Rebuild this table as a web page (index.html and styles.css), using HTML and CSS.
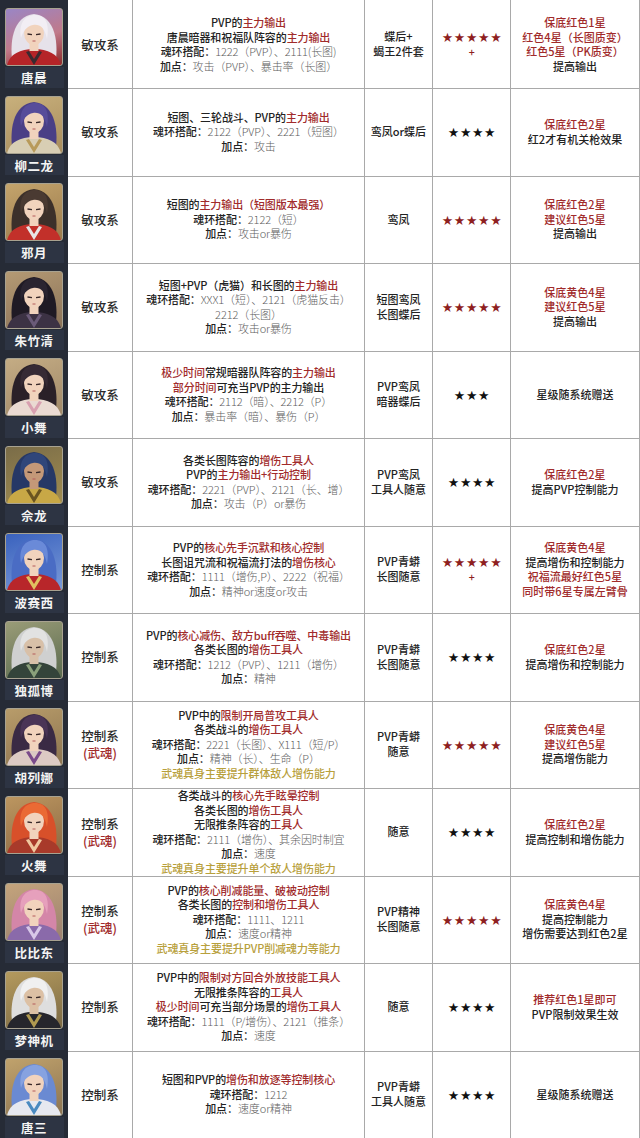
FILE: index.html
```html
<!DOCTYPE html>
<html lang="zh-CN">
<head>
<meta charset="utf-8">
<title>斗罗魂师推荐</title>
<link rel="stylesheet" href="styles.css">
</head>
<body>
<svg class="defs" width="0" height="0" aria-hidden="true">
  <symbol id="fig" viewBox="0 0 56 56">
    <path class="hb" d="M7 56 C3 36 6 7 28 5 C50 7 53 36 49 56 Z"/>
    <path class="cl" d="M1 56 C4 45 14 40 28 40 C42 40 52 45 55 56 Z"/>
    <path class="ac" d="M20 43 L28 56 L36 43 L33 42 L28 50 L23 42 Z"/>
    <rect class="sk" x="23.5" y="31" width="9" height="11"/>
    <ellipse class="sk" cx="28" cy="24" rx="10" ry="12"/>
    <path class="hf" d="M15 29 C12 12 21 6 29 6 C39 6 44 14 41 30 C39 19 34 15 27 16 C21 17 17 22 15 29 Z"/>
    <path class="ey" d="M21.5 25 L26 25.6 M30 25.6 L34.5 25"/>
    <path class="lp" d="M26.5 32 L29.5 32"/>
  </symbol>
</svg>

<main class="sheet">
  <div class="row">
    <div class="av"><div class="pic a1"><svg viewBox="0 0 56 56"><use href="#fig"/></svg></div><div class="nm">唐晨</div></div>
    <div class="c type">敏攻系</div>
    <div class="c desc"><div>PVP的<span class="r">主力输出</span><br>唐晨暗器和祝福队阵容的<span class="r">主力输出</span><br>魂环搭配：<span class="g">1222（PVP）、2111(长图)</span><br>加点：<span class="g">攻击（PVP）、暴击率（长图）</span></div></div>
    <div class="c item"><div>蝶后+<br>蝎王2件套</div></div>
    <div class="c stars red"><div>★★★★★<br>+</div></div>
    <div class="c note"><div><span class="r">保底红色1星</span><br><span class="r">红色4星（长图质变）</span><br><span class="r">红色5星（PK质变）</span><br>提高输出</div></div>
  </div>

  <div class="row">
    <div class="av"><div class="pic a2"><svg viewBox="0 0 56 56"><use href="#fig"/></svg></div><div class="nm">柳二龙</div></div>
    <div class="c type">敏攻系</div>
    <div class="c desc"><div>短图、三轮战斗、PVP的<span class="r">主力输出</span><br>魂环搭配：<span class="g">2122（PVP）、2221（短图）</span><br>加点：<span class="g">攻击</span></div></div>
    <div class="c item"><div>鸾凤or蝶后</div></div>
    <div class="c stars"><div>★★★★</div></div>
    <div class="c note"><div><span class="r">保底红色2星</span><br>红2才有机关枪效果</div></div>
  </div>

  <div class="row">
    <div class="av"><div class="pic a3"><svg viewBox="0 0 56 56"><use href="#fig"/></svg></div><div class="nm">邪月</div></div>
    <div class="c type">敏攻系</div>
    <div class="c desc"><div>短图的<span class="r">主力输出（短图版本最强）</span><br>魂环搭配：<span class="g">2122（短）</span><br>加点：<span class="g">攻击or暴伤</span></div></div>
    <div class="c item"><div>鸾凤</div></div>
    <div class="c stars red"><div>★★★★★</div></div>
    <div class="c note"><div><span class="r">保底红色2星</span><br><span class="r">建议红色5星</span><br>提高输出</div></div>
  </div>

  <div class="row">
    <div class="av"><div class="pic a4"><svg viewBox="0 0 56 56"><use href="#fig"/></svg></div><div class="nm">朱竹清</div></div>
    <div class="c type">敏攻系</div>
    <div class="c desc"><div>短图+PVP（虎猫）和长图的<span class="r">主力输出</span><br>魂环搭配：<span class="g">XXX1（短）、2121（虎猫反击）</span><br><span class="g">2212（长图）</span><br>加点：<span class="g">攻击or暴伤</span></div></div>
    <div class="c item"><div>短图鸾凤<br>长图蝶后</div></div>
    <div class="c stars red"><div>★★★★★</div></div>
    <div class="c note"><div><span class="r">保底黄色4星</span><br><span class="r">建议红色5星</span><br>提高输出</div></div>
  </div>

  <div class="row">
    <div class="av"><div class="pic a5"><svg viewBox="0 0 56 56"><use href="#fig"/></svg></div><div class="nm">小舞</div></div>
    <div class="c type">敏攻系</div>
    <div class="c desc"><div><span class="r">极少时间</span>常规暗器队阵容的<span class="r">主力输出</span><br><span class="r">部分时间</span>可充当PVP的主力输出<br>魂环搭配：<span class="g">2112（暗）、2212（P）</span><br>加点：<span class="g">暴击率（暗）、暴伤（P）</span></div></div>
    <div class="c item"><div>PVP鸾凤<br>暗器蝶后</div></div>
    <div class="c stars"><div>★★★</div></div>
    <div class="c note"><div>星级随系统赠送</div></div>
  </div>

  <div class="row">
    <div class="av"><div class="pic a6"><svg viewBox="0 0 56 56"><use href="#fig"/></svg></div><div class="nm">佘龙</div></div>
    <div class="c type">敏攻系</div>
    <div class="c desc"><div>各类长图阵容的<span class="r">增伤工具人</span><br>PVP的<span class="r">主力输出+行动控制</span><br>魂环搭配：<span class="g">2221（PVP）、2121（长、增）</span><br>加点：<span class="g">攻击（P）or暴伤</span></div></div>
    <div class="c item"><div>PVP鸾凤<br>工具人随意</div></div>
    <div class="c stars"><div>★★★★</div></div>
    <div class="c note"><div><span class="r">保底红色2星</span><br>提高PVP控制能力</div></div>
  </div>

  <div class="row">
    <div class="av"><div class="pic a7"><svg viewBox="0 0 56 56"><use href="#fig"/></svg></div><div class="nm">波赛西</div></div>
    <div class="c type">控制系</div>
    <div class="c desc"><div>PVP的<span class="r">核心先手沉默和核心控制</span><br>长图诅咒流和祝福流打法的<span class="r">增伤核心</span><br>魂环搭配：<span class="g">1111（增伤,P）、2222（祝福）</span><br>加点：<span class="g">精神or速度or攻击</span></div></div>
    <div class="c item"><div>PVP青蟒<br>长图随意</div></div>
    <div class="c stars red"><div>★★★★★<br>+</div></div>
    <div class="c note"><div><span class="r">保底黄色4星</span><br>提高增伤和控制能力<br><span class="r">祝福流最好红色5星</span><br><span class="r">同时带6星专属左臂骨</span></div></div>
  </div>

  <div class="row">
    <div class="av"><div class="pic a8"><svg viewBox="0 0 56 56"><use href="#fig"/></svg></div><div class="nm">独孤博</div></div>
    <div class="c type">控制系</div>
    <div class="c desc"><div>PVP的<span class="r">核心减伤、敌方buff吞噬、中毒输出</span><br>各类长图的<span class="r">增伤工具人</span><br>魂环搭配：<span class="g">1212（PVP）、1211（增伤）</span><br>加点：<span class="g">精神</span></div></div>
    <div class="c item"><div>PVP青蟒<br>长图随意</div></div>
    <div class="c stars"><div>★★★★</div></div>
    <div class="c note"><div><span class="r">保底红色2星</span><br>提高增伤和控制能力</div></div>
  </div>

  <div class="row">
    <div class="av"><div class="pic a9"><svg viewBox="0 0 56 56"><use href="#fig"/></svg></div><div class="nm">胡列娜</div></div>
    <div class="c type"><div>控制系<br><span class="r">(武魂)</span></div></div>
    <div class="c desc"><div>PVP中的<span class="r">限制开局普攻工具人</span><br>各类战斗的<span class="r">增伤工具人</span><br>魂环搭配：<span class="g">2221（长图）、X111（短/P）</span><br>加点：<span class="g">精神（长）、生命（P）</span><br><span class="y">武魂真身主要提升群体敌人增伤能力</span></div></div>
    <div class="c item"><div>PVP青蟒<br>随意</div></div>
    <div class="c stars red"><div>★★★★★</div></div>
    <div class="c note"><div><span class="r">保底黄色4星</span><br><span class="r">建议红色5星</span><br>提高增伤能力</div></div>
  </div>

  <div class="row">
    <div class="av"><div class="pic a10"><svg viewBox="0 0 56 56"><use href="#fig"/></svg></div><div class="nm">火舞</div></div>
    <div class="c type"><div>控制系<br><span class="r">(武魂)</span></div></div>
    <div class="c desc"><div>各类战斗的<span class="r">核心先手眩晕控制</span><br>各类长图的<span class="r">增伤工具人</span><br>无限推条阵容的<span class="r">工具人</span><br>魂环搭配：<span class="g">2111（增伤）、其余因时制宜</span><br>加点：<span class="g">速度</span><br><span class="y">武魂真身主要提升单个敌人增伤能力</span></div></div>
    <div class="c item"><div>随意</div></div>
    <div class="c stars"><div>★★★★</div></div>
    <div class="c note"><div><span class="r">保底红色2星</span><br>提高控制和增伤能力</div></div>
  </div>

  <div class="row">
    <div class="av"><div class="pic a11"><svg viewBox="0 0 56 56"><use href="#fig"/></svg></div><div class="nm">比比东</div></div>
    <div class="c type"><div>控制系<br><span class="r">(武魂)</span></div></div>
    <div class="c desc"><div>PVP的<span class="r">核心削减能量、破被动控制</span><br>各类长图的<span class="r">控制和增伤工具人</span><br>魂环搭配：<span class="g">1111、1211</span><br>加点：<span class="g">速度or精神</span><br><span class="y">武魂真身主要提升PVP削减魂力等能力</span></div></div>
    <div class="c item"><div>PVP精神<br>长图随意</div></div>
    <div class="c stars red"><div>★★★★★</div></div>
    <div class="c note"><div><span class="r">保底黄色4星</span><br>提高控制能力<br>增伤需要达到红色2星</div></div>
  </div>

  <div class="row">
    <div class="av"><div class="pic a12"><svg viewBox="0 0 56 56"><use href="#fig"/></svg></div><div class="nm">梦神机</div></div>
    <div class="c type">控制系</div>
    <div class="c desc"><div>PVP中的<span class="r">限制对方回合外放技能工具人</span><br>无限推条阵容的<span class="r">工具人</span><br><span class="r">极少时间</span>可充当部分场景的<span class="r">增伤工具人</span><br>魂环搭配：<span class="g">1111（P/增伤）、2121（推条）</span><br>加点：<span class="g">速度</span></div></div>
    <div class="c item"><div>随意</div></div>
    <div class="c stars"><div>★★★★</div></div>
    <div class="c note"><div><span class="r">推荐红色1星即可</span><br>PVP限制效果生效</div></div>
  </div>

  <div class="row">
    <div class="av"><div class="pic a13"><svg viewBox="0 0 56 56"><use href="#fig"/></svg></div><div class="nm">唐三</div></div>
    <div class="c type">控制系</div>
    <div class="c desc"><div>短图和PVP的<span class="r">增伤和放逐等控制核心</span><br>魂环搭配：<span class="g">1212</span><br>加点：<span class="g">速度or精神</span></div></div>
    <div class="c item"><div>PVP青蟒<br>工具人随意</div></div>
    <div class="c stars"><div>★★★★</div></div>
    <div class="c note"><div>星级随系统赠送</div></div>
  </div>
</main>
</body>
</html>
```

FILE: styles.css
```css
html, body {
  margin: 0;
  padding: 0;
  background: #ffffff;
}

body {
  font-family: "Noto Sans CJK SC", "Noto Sans", sans-serif;
  color: #222;
}

.defs {
  position: absolute;
  width: 0;
  height: 0;
  overflow: hidden;
}

.sheet {
  width: 640px;
  display: flex;
  flex-direction: column;
}

.row {
  display: grid;
  grid-template-columns: 68px 65px 232px 68px 78px 129px;
  height: 87.5px;
}

/* avatar column */
.av {
  background: #262b36;
  display: flex;
  flex-direction: column;
  align-items: center;
  padding-top: 8px;
  box-sizing: border-box;
}

.pic {
  width: 56px;
  height: 56px;
  border: 1.5px solid #a8a290;
  border-radius: 3px;
  overflow: hidden;
  flex: none;
}

.pic svg {
  display: block;
  width: 56px;
  height: 56px;
}

.nm {
  width: 59px;
  height: 22px;
  margin-top: 1px;
  background: #2d3443;
  color: #f4f4f4;
  font-size: 12.5px;
  font-weight: 700;
  line-height: 22px;
  text-align: center;
  letter-spacing: 0.5px;
}

/* figure parts */
.hb { fill: var(--hair); }
.hf { fill: var(--hair2, var(--hair)); }
.cl { fill: var(--cloth); }
.ac { fill: var(--acc, rgba(255,255,255,0.35)); }
.sk { fill: var(--skin, #f1d3bd); }
.ey { stroke: #3a2a2a; stroke-width: 1.3; fill: none; }
.lp { stroke: #b45a5a; stroke-width: 1; fill: none; }

.a1 { background: linear-gradient(160deg, #9a86c6 0%, #c07a8a 55%, #8a2a2a 100%); --hair: #e6e2ea; --hair2: #f2eef4; --cloth: #b52428; --acc: #3a2a30; }
.a2 { background: linear-gradient(160deg, #c8b07c 0%, #a88c5c 100%); --hair: #4a3f86; --hair2: #574c9a; --cloth: #d8ceb4; --acc: #b89a5a; }
.a3 { background: linear-gradient(160deg, #c4a46c 0%, #9a7a4c 100%); --hair: #3c302a; --hair2: #4a3a32; --cloth: #c2302a; --acc: #e8e4e4; }
.a4 { background: linear-gradient(160deg, #b49a74 0%, #8a7258 100%); --hair: #1f1a24; --hair2: #2a2430; --cloth: #3c3244; --acc: #6a5a78; }
.a5 { background: linear-gradient(160deg, #c4ac84 0%, #a08868 100%); --hair: #2a2028; --hair2: #362a34; --cloth: #eadad2; --acc: #d8a0b0; }
.a6 { background: linear-gradient(160deg, #7a6c48 0%, #a08c50 100%); --hair: #263866; --hair2: #30467a; --cloth: #c8a846; --acc: #6a5420; --skin: #c49878; }
.a7 { background: linear-gradient(160deg, #3a62be 0%, #7a9ad8 100%); --hair: #4a6cc4; --hair2: #6a8ad8; --cloth: #b8262a; --acc: #e0c060; }
.a8 { background: linear-gradient(160deg, #9a9c78 0%, #5a6a4e 100%); --hair: #cfd0d0; --hair2: #e2e2e2; --cloth: #34443a; --acc: #8aa07a; --skin: #d8c0a8; }
.a9 { background: linear-gradient(160deg, #b89c6a 0%, #8c7450 100%); --hair: #3a2a44; --hair2: #4a3456; --cloth: #dccac4; --acc: #7a4a8a; }
.a10 { background: linear-gradient(160deg, #bc9660 0%, #8c6a44 100%); --hair: #d8502a; --hair2: #ea6a34; --cloth: #a83a2a; --acc: #f0c8a0; }
.a11 { background: linear-gradient(160deg, #c4a47c 0%, #9a8070 100%); --hair: #d486a8; --hair2: #e6a0bc; --cloth: #8a6aaa; --acc: #d8c8e8; }
.a12 { background: linear-gradient(160deg, #b49a5e 0%, #7c6a44 100%); --hair: #dedede; --hair2: #f0f0f0; --cloth: #26262c; --acc: #b09a50; --skin: #dcc0a4; }
.a13 { background: linear-gradient(160deg, #c0a26c 0%, #8c7452 100%); --hair: #6a8ad2; --hair2: #86a2e0; --cloth: #e6e8f0; --acc: #4a8ac0; }

/* table cells */
.c {
  border-right: 1px solid #a9a9a9;
  border-bottom: 1px solid #a9a9a9;
  display: flex;
  align-items: center;
  justify-content: center;
  text-align: center;
  font-size: 11px;
  line-height: 14.5px;
  color: #222;
  font-weight: 500;
  box-sizing: border-box;
  white-space: nowrap;
}

.type {
  font-size: 12.5px;
  line-height: 17px;
  color: #2a2a2a;
}

.desc {
  letter-spacing: -0.1px;
}

.item {
  line-height: 15px;
}

.stars {
  font-size: 10.5px;
  letter-spacing: 1.6px;
  line-height: 15px;
  color: #111;
  padding-left: 2px;
}

.stars.red {
  color: #8e1f1f;
}

.note {
  line-height: 14.5px;
}

.r { color: #a12b2b; }
.g { color: #5e5e5e; font-weight: 300; }
.y { color: #b8a03c; }
```
